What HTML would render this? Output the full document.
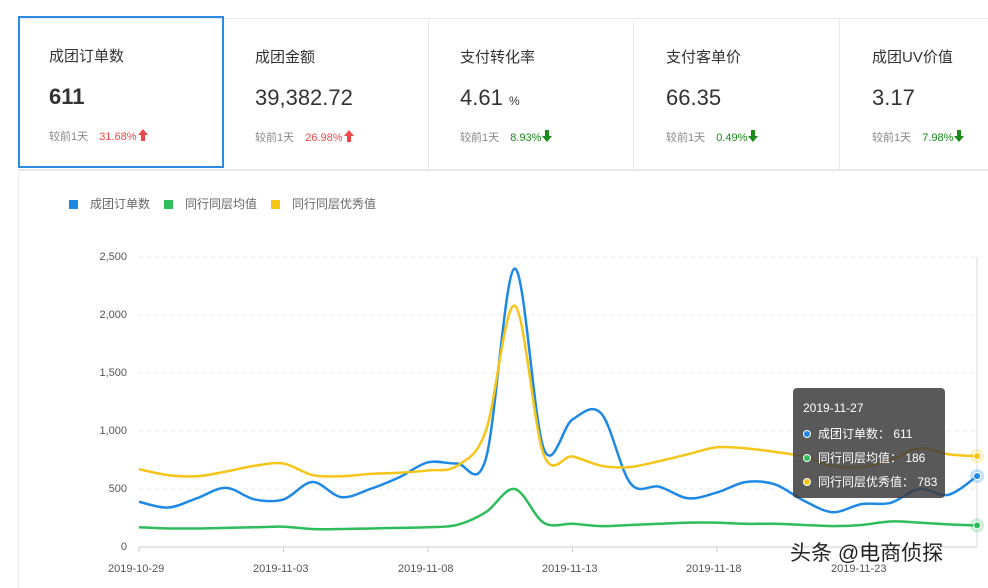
<!DOCTYPE html>
<html><head><meta charset="utf-8"><style>
body{margin:0;width:988px;height:584px;overflow:hidden;background:#fff;font-family:"Liberation Sans","Noto Sans CJK SC",sans-serif;position:relative}
.top{position:absolute;left:18px;top:18px;width:970px;height:150px;border-top:1px solid #e8e8e8;border-bottom:2px solid #e8e8e8}
.card{position:absolute;top:0;height:150px;width:205px;border-right:1px solid #e8e8e8;box-sizing:border-box}
.card .t{position:absolute;left:31px;top:27px;font-size:15px;color:#333}
.card .v{position:absolute;left:31px;top:66px;font-size:22px;color:#333}
.card .c{position:absolute;left:31px;top:110px;font-size:11px;color:#888}
.card .c b{font-weight:normal;margin-left:8px}
.card svg{vertical-align:-1px;margin-left:1px}
.sel{border:2px solid #2a8de0;top:-3px;height:152px;left:0}
.leftline{position:absolute;left:18px;top:168px;width:1px;height:420px;background:#eee}
.leg{position:absolute;top:195px;font-size:12px;color:#666}
.leg i{display:inline-block;width:9px;height:9px;margin-right:12px;vertical-align:-1px}
.ax{position:absolute;font-size:11px;color:#555}
.tip{position:absolute;left:793px;top:388px;width:152px;height:110px;background:rgba(60,60,60,.85);border-radius:4px;color:#fff;font-size:12px}
.tip div{position:absolute;left:10px}
.tip span{display:inline-block;width:6px;height:6px;border-radius:50%;border:1.5px solid #fff;margin-right:7px;vertical-align:0}
</style></head><body>
<div class="top">
<div class="card sel" style="width:206px"><div class="t" style="left:29px">成团订单数</div><div class="v" style="left:29px;font-weight:bold">611</div><div class="c" style="left:29px">较前1天 <b style="color:#f04848">31.68%<svg width="10" height="12" viewBox="0 0 10 12"><path d="M5 0L10 6H7V12H3V6H0Z" fill="#f04848"/></svg></b></div></div>
<div class="card" style="left:206px"><div class="t">成团金额</div><div class="v">39,382.72</div><div class="c">较前1天 <b style="color:#f04848">26.98%<svg width="10" height="12" viewBox="0 0 10 12"><path d="M5 0L10 6H7V12H3V6H0Z" fill="#f04848"/></svg></b></div></div>
<div class="card" style="left:411px"><div class="t">支付转化率</div><div class="v">4.61 <small style="font-size:12px">%</small></div><div class="c">较前1天 <b style="color:#1a8a1a">8.93%<svg width="10" height="12" viewBox="0 0 10 12"><path d="M5 12L10 6H7V0H3V6H0Z" fill="#1a8a1a"/></svg></b></div></div>
<div class="card" style="left:617px"><div class="t">支付客单价</div><div class="v">66.35</div><div class="c">较前1天 <b style="color:#1a8a1a">0.49%<svg width="10" height="12" viewBox="0 0 10 12"><path d="M5 12L10 6H7V0H3V6H0Z" fill="#1a8a1a"/></svg></b></div></div>
<div class="card" style="left:823px;border-right:none"><div class="t">成团UV价值</div><div class="v">3.17</div><div class="c">较前1天 <b style="color:#1a8a1a">7.98%<svg width="10" height="12" viewBox="0 0 10 12"><path d="M5 12L10 6H7V0H3V6H0Z" fill="#1a8a1a"/></svg></b></div></div>
</div>
<div class="leftline"></div>
<div class="leg" style="left:69px"><i style="background:#1e88e5"></i>成团订单数</div>
<div class="leg" style="left:164px"><i style="background:#2dbd5a"></i>同行同层均值</div>
<div class="leg" style="left:271px"><i style="background:#f5c518"></i>同行同层优秀值</div>
<svg id="ch" width="988" height="584" style="position:absolute;left:0;top:0"></svg>
<div class="ax" style="right:861px;top:251px">2,500</div>
<div class="ax" style="right:861px;top:309px">2,000</div>
<div class="ax" style="right:861px;top:367px">1,500</div>
<div class="ax" style="right:861px;top:425px">1,000</div>
<div class="ax" style="right:861px;top:483px">500</div>
<div class="ax" style="right:861px;top:541px">0</div>
<div class="ax" style="left:108px;top:563px">2019-10-29</div>
<div class="ax" style="left:253px;top:563px">2019-11-03</div>
<div class="ax" style="left:398px;top:563px">2019-11-08</div>
<div class="ax" style="left:542px;top:563px">2019-11-13</div>
<div class="ax" style="left:686px;top:563px">2019-11-18</div>
<div class="ax" style="left:831px;top:563px">2019-11-23</div>
<div class="tip">
<div style="top:13px">2019-11-27</div>
<div style="top:37px"><span style="background:#1e88e5"></span>成团订单数： 611</div>
<div style="top:61px"><span style="background:#2dbd5a"></span>同行同层均值： 186</div>
<div style="top:85px"><span style="background:#f5c518"></span>同行同层优秀值： 783</div>
</div>
<div style="position:absolute;left:790px;top:537px;font-size:21px;color:#222;text-shadow:0 0 2px #fff">头条 @电商侦探</div>
<script>
var s=document.getElementById('ch'),h='';
function X(i){return 139+i*28.9}function Y(v){return 547-v*0.116}
for(var k=0;k<=5;k++){var y=Y(k*500);h+='<line x1="139" x2="977" y1="'+y+'" y2="'+y+'" stroke="'+(k?'#e8e8e8':'#ccc')+'" stroke-dasharray="'+(k?'4 4':'')+'"/>';}
h+='<line x1="977" x2="977" y1="257" y2="547" stroke="#ddd"/>';
for(var k=0;k<6;k++){var x=X(k*5);h+='<line x1="'+x+'" x2="'+x+'" y1="547" y2="552" stroke="#ccc"/>';}
function P(a,c){var p=a.map(function(v,i){return[X(i),Y(v)]}),d='M'+p[0];
for(var i=0;i<p.length-1;i++){var p0=p[i-1]||p[i],p1=p[i],p2=p[i+1],p3=p[i+2]||p2;
d+='C'+(p1[0]+(p2[0]-p0[0])/6)+','+(p1[1]+(p2[1]-p0[1])/6)+' '+(p2[0]-(p3[0]-p1[0])/6)+','+(p2[1]-(p3[1]-p1[1])/6)+' '+p2;}
h+='<path d="'+d+'" fill="none" stroke="'+c+'" stroke-width="2.5"/>';var l=p[p.length-1];
h+='<circle cx="'+l[0]+'" cy="'+l[1]+'" r="7" fill="'+c+'" opacity=".25"/><circle cx="'+l[0]+'" cy="'+l[1]+'" r="3.5" fill="'+c+'" stroke="#fff"/>';}
P([390,340,420,510,410,410,560,430,500,600,730,720,760,2400,850,1100,1150,550,520,420,470,560,540,400,300,370,380,500,450,611],'#1e88e5');
P([170,160,160,165,170,175,155,155,160,165,170,190,300,500,210,200,180,190,200,210,210,200,200,190,180,190,220,210,195,186],'#2dbd5a');
P([670,620,610,650,700,720,620,610,630,640,660,700,1000,2080,800,780,700,690,740,800,860,850,820,780,700,690,750,850,800,783],'#f5c518');
s.innerHTML=h;
</script>
</body></html>
